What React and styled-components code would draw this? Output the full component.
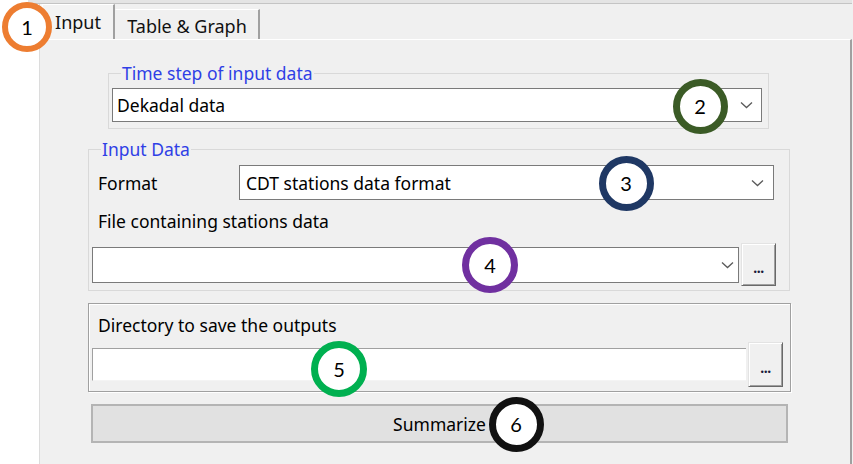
import styled, { createGlobalStyle } from "styled-components";

const GlobalStyle = createGlobalStyle`
  html, body {
    margin: 0;
    padding: 0;
    background: #ffffff;
  }
  body {
    font-family: "Noto Sans", "Open Sans", sans-serif;
  }
`;

const Screen = styled.div`
  position: relative;
  width: 853px;
  height: 464px;
  overflow: hidden;
  display: flex;
  background: #ffffff;
  font-size: 16px;
  color: #000;
`;

const Gutter = styled.div`
  width: 39px;
  flex-shrink: 0;
  background: #ffffff;
`;

const Panel = styled.div`
  flex: 1;
  display: flex;
  flex-direction: column;
  background: #f0f0f0;
  border-left: 1px solid #dcdcdc;
  box-shadow: inset 2px 0 0 #f9f9f9;
  padding-left: 2px;
`;

const TopStrip = styled.div`
  height: 3px;
  background: #e4e4e4;
  border-bottom: 1px solid #c4c4c4;
  margin-left: -14px;
  margin-right: 1px;
`;

const TabRow = styled.div`
  height: 35px;
  display: flex;
  align-items: flex-end;
`;

const Tab = styled.div`
  height: ${(p) => (p.$active ? 35 : 30)}px;
  width: ${(p) => p.$width}px;
  box-sizing: border-box;
  display: flex;
  align-items: center;
  justify-content: center;
  background: ${(p) => (p.$active ? "#f3f3f3" : "#f0f0f0")};
  border-top: 1px solid #ffffff;
  border-left: 1px solid ${(p) => (p.$active ? "#ffffff" : "transparent")};
  border-right: 2px solid #a0a0a0;
  font-size: 18px;
  color: #111;
  padding-top: ${(p) => (p.$active ? 0 : 3)}px;
`;

const TabPage = styled.div`
  flex: 1;
  border-top: 1px solid #ffffff;
  border-right: 2px solid #a0a0a0;
  margin-right: 1px;
  margin-left: -2px;
  padding-left: 2px;
  background: #f0f0f0;
  display: flex;
  flex-direction: column;
`;

const Group = styled.fieldset`
  margin: ${(p) => p.$top}px 0 0 ${(p) => p.$left}px;
  width: ${(p) => p.$width}px;
  box-sizing: border-box;
  border: 1px solid #d9d9d9;
  padding: 0 ${(p) => p.$right}px ${(p) => p.$bottom}px 3px;
  min-width: 0;
`;

const Legend = styled.legend`
  margin-left: 9px;
  padding: 0 1px;
  height: 22px;
  line-height: 22px;
  font-size: 17.5px;
  color: #2f3fe6;
`;

const Frame = styled.div`
  margin: 12px 0 0 46px;
  width: 703px;
  height: 89px;
  box-sizing: border-box;
  border: 1px solid #a0a0a0;
  box-shadow: inset 1px 1px 0 #ffffff, 1px 1px 0 #ffffff;
  padding: 10px 7px 0 3px;
`;

const Label = styled.div`
  height: 22px;
  line-height: 22px;
  font-size: 17.5px;
  padding-left: ${(p) => p.$indent || 0}px;
  margin-top: ${(p) => p.$top || 0}px;
  white-space: nowrap;
`;

const FieldRow = styled.div`
  display: flex;
  align-items: center;
  gap: 2px;
  height: ${(p) => p.$height}px;
  margin-top: ${(p) => p.$top || 0}px;
  margin-right: ${(p) => p.$right || 0}px;
`;

const Combo = styled.div`
  flex: 1;
  height: ${(p) => p.$height}px;
  box-sizing: border-box;
  background: #ffffff;
  border: 1px solid #7a7a7a;
  display: flex;
  align-items: center;
  padding: 0 ${(p) => p.$arrowGap}px 0 ${(p) => p.$textPad || 4}px;
  font-size: 17.5px;
  margin-top: ${(p) => p.$top || 0}px;
`;

const ComboText = styled.span`
  flex: 1;
  white-space: nowrap;
`;

const Chevron = styled.svg`
  width: 13px;
  height: 8px;
  flex-shrink: 0;
`;

const TextBox = styled.div`
  flex: 1;
  height: 33px;
  box-sizing: border-box;
  background: #ffffff;
  border-top: 1px solid #a0a0a0;
  border-left: 1px solid #a0a0a0;
  border-bottom: 1px solid #f4f4f4;
`;

const BrowseButton = styled.button`
  width: 35px;
  height: ${(p) => p.$height}px;
  flex-shrink: 0;
  box-sizing: border-box;
  background: #f0f0f0;
  border: 1px solid;
  border-color: #e3e3e3 #696969 #696969 #e3e3e3;
  box-shadow: inset 1px 1px 0 #ffffff, inset -1px -1px 0 #a0a0a0;
  font-family: "Noto Sans", sans-serif;
  font-size: 14px;
  color: #1b1b3a;
  padding: 6px 0 0;
  line-height: 1;
  font-weight: 700;
  letter-spacing: -0.5px;
`;

const ActionButton = styled.button`
  margin: 12px 0 0 49px;
  width: 697px;
  height: 39px;
  box-sizing: border-box;
  background: #e1e1e1;
  border: 2px solid #b4b4b4;
  font-family: "Noto Sans", sans-serif;
  font-size: 17.5px;
  color: #000;
  padding: 1px 0 0;
`;

const Marker = styled.div`
  position: absolute;
  left: ${(p) => p.$x - p.$size / 2}px;
  top: ${(p) => p.$y - p.$size / 2}px;
  width: ${(p) => p.$size}px;
  height: ${(p) => p.$size}px;
  box-sizing: border-box;
  border-radius: 50%;
  border: ${(p) => p.$stroke}px solid ${(p) => p.$color};
  background: #ffffff;
  display: flex;
  align-items: center;
  justify-content: center;
  font-family: Lato, "Liberation Sans", sans-serif;
  font-size: 20px;
  color: #000;
`;

const ChevronIcon = () => (
  <Chevron viewBox="0 0 13 8">
    <path d="M1 1.5 L6.5 6.5 L12 1.5" fill="none" stroke="#5a5a5a" strokeWidth="1.3" />
  </Chevron>
);

const markers = [
  { n: 1, x: 27, y: 27, size: 50, stroke: 6, color: "#ed7d31" },
  { n: 2, x: 700, y: 106, size: 55, stroke: 7, color: "#3b5b26" },
  { n: 3, x: 626, y: 183, size: 55, stroke: 7, color: "#1f3864" },
  { n: 4, x: 490, y: 265, size: 56, stroke: 7, color: "#7030a0" },
  { n: 5, x: 339, y: 369, size: 56, stroke: 7, color: "#00b050" },
  { n: 6, x: 516, y: 424, size: 55, stroke: 7, color: "#111111" },
];

export default function App() {
  return (
    <>
      <GlobalStyle />
      <Screen>
        <Gutter />
        <Panel>
          <TopStrip />
          <TabRow>
            <Tab $active $width={73}>
              Input
            </Tab>
            <Tab $width={145}>Table &amp; Graph</Tab>
          </TabRow>
          <TabPage>
            <Group $top={22} $left={66} $width={661} $right={6} $bottom={6}>
              <Legend>Time step of input data</Legend>
              <Combo $height={34} $top={4} $arrowGap={8}>
                <ComboText>Dekadal data</ComboText>
                <ChevronIcon />
              </Combo>
            </Group>

            <Group $top={9} $left={46} $width={702} $right={13} $bottom={4}>
              <Legend>Input Data</Legend>
              <FieldRow $height={35} $top={5} $right={2}>
                <Label $indent={6} style={{ width: 139 }}>
                  Format
                </Label>
                <Combo $height={35} $arrowGap={9} $textPad={6}>
                  <ComboText>CDT stations data format</ComboText>
                  <ChevronIcon />
                </Combo>
              </FieldRow>
              <Label $indent={6} $top={10}>
                File containing stations data
              </Label>
              <FieldRow $height={43} $top={11}>
                <Combo $height={36} $arrowGap={4}>
                  <ComboText />
                  <ChevronIcon />
                </Combo>
                <BrowseButton $height={43}>...</BrowseButton>
              </FieldRow>
            </Group>

            <Frame>
              <Label $indent={6}>Directory to save the outputs</Label>
              <FieldRow $height={45} $top={6}>
                <TextBox />
                <BrowseButton $height={45}>...</BrowseButton>
              </FieldRow>
            </Frame>

            <ActionButton>Summarize</ActionButton>
          </TabPage>
        </Panel>

        {markers.map((m) => (
          <Marker key={m.n} $x={m.x} $y={m.y} $size={m.size} $stroke={m.stroke} $color={m.color}>
            {m.n}
          </Marker>
        ))}
      </Screen>
    </>
  );
}
